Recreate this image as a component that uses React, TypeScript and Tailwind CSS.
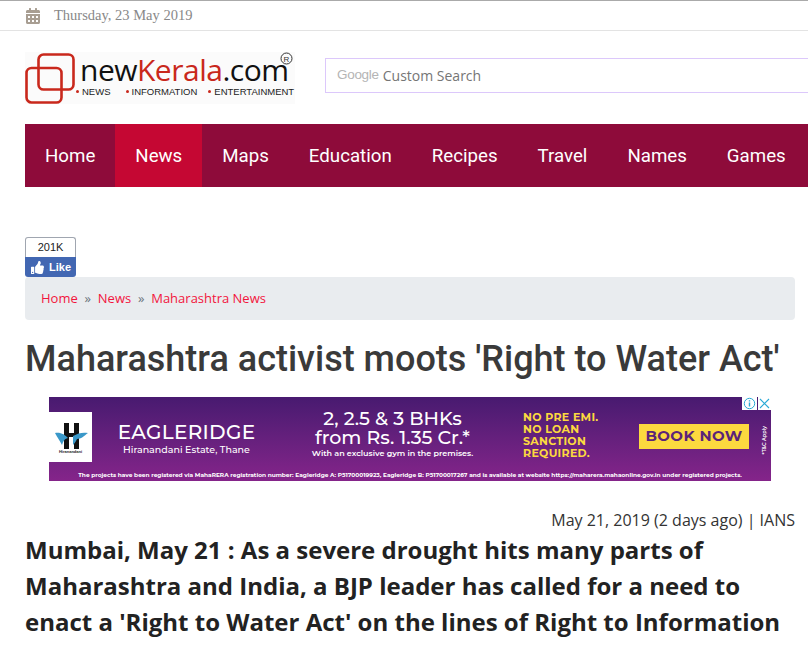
import { FaCalendarAlt, FaThumbsUp } from "react-icons/fa";

const navItems = ["Home", "News", "Maps", "Education", "Recipes", "Travel", "Names", "Games"];

const Dot = () => <span className="mr-[3px] h-[3px] w-[3px] shrink-0 rounded-full bg-[#c9281c]" />;

const Logo = () => (
  <div className="relative flex h-[52px] w-[270px] items-start bg-[#fbfbfb]">
    <svg width="50" height="52" viewBox="0 0 50 52" fill="none" stroke="#c9281c" strokeWidth="2.6" className="shrink-0">
      <rect x="13.5" y="2.5" width="35" height="35" rx="5" />
      <rect x="1.5" y="16" width="35" height="34.5" rx="5" />
    </svg>
    <div className="flex flex-col">
      <div className="ml-[5px] flex h-[35px] items-center font-['Open_Sans',sans-serif] text-[30px] leading-none tracking-[-0.5px] text-[#111]">
        <span>new</span>
        <span className="text-[#c9281c]">Kerala</span>
        <span>.com</span>
      </div>
      <div className="ml-[1px] flex items-center font-['Liberation_Sans',sans-serif] text-[9.5px] leading-none text-[#222]">
        <Dot />
        NEWS
        <span className="w-[15px]" />
        <Dot />
        INFORMATION
        <span className="w-[11px]" />
        <Dot />
        ENTERTAINMENT
      </div>
    </div>
    <svg width="13" height="13" viewBox="0 0 13 13" className="absolute left-[255px] top-0">
      <circle cx="6.5" cy="6.5" r="5.5" fill="none" stroke="#333" strokeWidth="1" />
      <text x="6.5" y="9.5" textAnchor="middle" fontSize="8" fontFamily="Liberation Sans, sans-serif" fill="#333">R</text>
    </svg>
  </div>
);

const LikeBox = () => (
  <div className="flex w-[51px] flex-col">
    <div className="flex h-[20px] items-center justify-center rounded-t-[3px] border border-b-0 border-[#a0a6b0] font-['Liberation_Sans',sans-serif] text-[11px] text-[#222]">
      201K
    </div>
    <div className="flex h-[20px] items-center gap-[5px] rounded-b-[3px] bg-[#4267b2] pl-[6px] font-['Liberation_Sans',sans-serif] text-[11px] font-bold text-white">
      <FaThumbsUp className="text-[13px]" />
      Like
    </div>
  </div>
);

const Ad = () => (
  <div className="relative flex h-[84px] w-[722px] flex-col bg-gradient-to-b from-[#481a70] to-[#85248a] font-['Montserrat','Inter',sans-serif] text-white">
    <div className="flex h-[73px] items-start">
      <div className="mt-[15px] flex h-[50px] w-[43px] flex-col items-center justify-end bg-white pb-[8px]">
        <svg width="36" height="26" viewBox="0 0 36 26" className="mb-[1px]">
          <path d="M11 0h5v26h-5zM21 0h5v26h-5zM16 10h5v4h-5z" fill="#111" />
          <path d="M2 10c6-1 10 2 13 5-4 1-5 4-6 7-2-4-5-8-7-12zM20 13c5-3 10-4 15-3-4 3-7 6-11 6-1 2-2 4-4 6 0-3 0-6 0-9z" fill="#3a98c9" />
        </svg>
        <span className="font-['Liberation_Sans',sans-serif] text-[4px] font-bold leading-none text-[#222]">Hiranandani</span>
      </div>
      <div className="ml-[27px] mt-[24px] flex w-[135px] flex-col items-center">
        <span className="whitespace-nowrap text-[20px] font-medium leading-[22px] tracking-[0.3px]">EAGLERIDGE</span>
        <span className="whitespace-nowrap text-[9.5px] font-medium leading-[14px]">Hiranandani Estate, Thane</span>
      </div>
      <div className="ml-[61px] mt-[12px] flex w-[155px] flex-col items-center whitespace-nowrap font-medium">
        <span className="text-[19px] leading-[19px]">2, 2.5 &amp; 3 BHKs</span>
        <span className="text-[19px] leading-[19px]">from Rs. 1.35 Cr.*</span>
        <span className="mt-[1px] text-[8px] font-semibold leading-[10px]">With an exclusive gym in the premises.</span>
      </div>
      <div className="ml-[53px] mt-[14px] flex w-[87px] flex-col whitespace-nowrap text-[11px] font-bold leading-[12px] tracking-[0.3px] text-[#fcd93f]">
        <span>NO PRE EMI.</span>
        <span>NO LOAN</span>
        <span>SANCTION</span>
        <span>REQUIRED.</span>
      </div>
      <div className="ml-[29px] mt-[27px] flex h-[25px] w-[110px] items-center justify-center whitespace-nowrap bg-[#fcd93f] text-[15px] font-bold tracking-[0.4px] text-[#5b2379]">
        BOOK NOW
      </div>
      <span className="ml-[12px] mt-[29px] rotate-180 whitespace-nowrap text-[5px] font-semibold [writing-mode:vertical-rl]">*T&amp;C Apply</span>
    </div>
    <div className="flex justify-center whitespace-nowrap text-[5.85px] font-bold leading-[9px]">
      The projects have been registered via MahaRERA registration number: Eagleridge A: P51700019923, Eagleridge B: P51700017267 and is available at website https://maharera.mahaonline.gov.in under registered projects.
    </div>
    <div className="absolute right-0 top-0 flex h-[13px] gap-px">
      <div className="flex w-[15px] items-center justify-center bg-white">
        <svg width="13" height="13" viewBox="0 0 13 13" fill="none" stroke="#29a9d6" strokeWidth="1">
          <circle cx="6.5" cy="6.5" r="5.2" />
          <path d="M6.5 5.5v4M6.5 3.2v1.2" strokeWidth="1.4" />
        </svg>
      </div>
      <div className="flex w-[13px] items-center justify-center bg-white">
        <svg width="11" height="11" viewBox="0 0 11 11" fill="none" stroke="#29a9d6" strokeWidth="1.1">
          <path d="M1 1l9 9M10 1l-9 9" />
        </svg>
      </div>
    </div>
  </div>
);

export default function App() {
  return (
    <div className="h-[646px] w-[808px] overflow-hidden bg-white">
      <div className="flex h-[31px] items-center border-b border-t border-b-[#e3e3e3] border-t-[#aaa] pl-[25px] font-['Liberation_Serif',serif] text-[14.5px] text-[#888]">
        <FaCalendarAlt className="text-[16px] text-[#a89e92]" />
        <span className="ml-[13px]">Thursday, 23 May 2019</span>
      </div>

      <div className="flex h-[93px] pl-[25px] pt-[21px]">
        <Logo />
        <div className="ml-[30px] mt-[6px] flex h-[35px] flex-1 items-center border border-r-0 border-[#dcc8fb] pl-[11px]">
          <span className="font-['Liberation_Sans',sans-serif] text-[13.5px] tracking-[-0.3px] text-[#b5b5b5]">Google</span>
          <span className="ml-[4px] font-['Open_Sans',sans-serif] text-[14px] text-[#757575]">Custom Search</span>
        </div>
      </div>

      <nav className="ml-[25px] flex h-[63px] bg-[#8e0b3a] font-['Roboto',sans-serif] text-[18.7px] text-white">
        {navItems.map((item) => (
          <a
            key={item}
            className={
              item === "News"
                ? "flex items-center bg-[#c50733] px-[20px] pt-[1px]"
                : "flex items-center px-[20px] pt-[1px]"
            }
          >
            {item}
          </a>
        ))}
      </nav>

      <div className="ml-[25px] mr-[13px] mt-[50px]">
        <LikeBox />
        <div className="flex h-[43px] items-center gap-[6.8px] rounded-[4px] bg-[#e9ecef] px-[16px] font-['Open_Sans',sans-serif] text-[13px] text-[#f2153d]">
          <span>Home</span>
          <span className="text-[#6c757d]">»</span>
          <span>News</span>
          <span className="text-[#6c757d]">»</span>
          <span>Maharashtra News</span>
        </div>
        <h1 className="mt-[17px] whitespace-nowrap font-['Roboto',sans-serif] text-[36px] font-medium leading-[44px] text-[#3a3a3a]">
          Maharashtra activist moots 'Right to Water Act'
        </h1>
      </div>

      <div className="ml-[49px] mt-[16px]">
        <Ad />
      </div>

      <div className="ml-[25px] mr-[13px] mt-[27px] font-['Open_Sans',sans-serif]">
        <p className="text-right text-[16px] leading-[24px] text-[#333]">May 21, 2019 (2 days ago) | IANS</p>
        <p className="text-[24px] font-bold leading-[36px] text-[#222]">
          Mumbai, May 21 : As a severe drought hits many parts of Maharashtra and India, a BJP leader has called for a need to enact a 'Right to Water Act' on the lines of Right to Information
        </p>
      </div>
    </div>
  );
}
